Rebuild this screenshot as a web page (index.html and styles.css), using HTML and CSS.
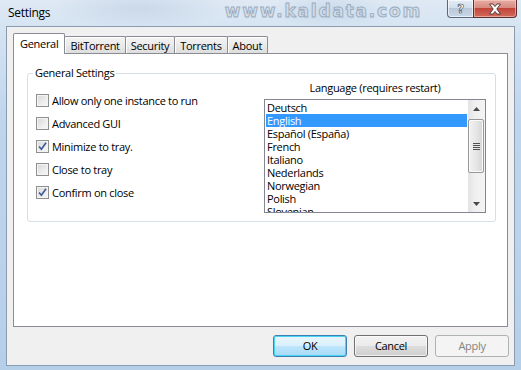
FILE: index.html
```html
<!DOCTYPE html>
<html>
<head>
<meta charset="utf-8">
<title>Settings</title>
<link rel="stylesheet" href="styles.css">
</head>
<body>
<div class="window">
  <div class="titlebar">
    <span class="title">Settings</span>
    <span class="watermark">www.kaldata.com</span>
    <div class="caption">
      <div class="cbtn help"><span class="q">?</span></div>
      <div class="cbtn close">
        <svg width="16" height="12" viewBox="0 0 16 12"><path d="M2.5 1 H6 L8 3.6 L10 1 H13.5 L9.8 6 L13.5 11 H10 L8 8.4 L6 11 H2.5 L6.2 6 Z" fill="#fff" stroke="#4a3030" stroke-width="0.9" stroke-linejoin="round"/></svg>
      </div>
    </div>
  </div>
  <div class="client">
    <div class="tabs">
      <div class="tab active">General</div>
      <div class="tab">BitTorrent</div>
      <div class="tab">Security</div>
      <div class="tab">Torrents</div>
      <div class="tab">About</div>
    </div>
    <div class="panel">
      <fieldset class="group">
        <legend>General Settings</legend>
        <div class="group-body">
          <div class="checks">
            <label class="check"><span class="box"></span>Allow only one instance to run</label>
            <label class="check"><span class="box"></span>Advanced GUI</label>
            <label class="check"><span class="box checked"><svg width="11" height="11" viewBox="0 0 11 11"><path d="M2 5.5 L4.4 8.2 L9 1.8" fill="none" stroke="#3d5a9c" stroke-width="1.7"/></svg></span>Minimize to tray.</label>
            <label class="check"><span class="box"></span>Close to tray</label>
            <label class="check"><span class="box checked"><svg width="11" height="11" viewBox="0 0 11 11"><path d="M2 5.5 L4.4 8.2 L9 1.8" fill="none" stroke="#3d5a9c" stroke-width="1.7"/></svg></span>Confirm on close</label>
          </div>
          <div class="lang">
            <div class="lang-label">Language (requires restart)</div>
            <div class="listbox">
              <ul class="items">
                <li>Deutsch</li>
                <li class="selected">English</li>
                <li>Español (España)</li>
                <li>French</li>
                <li>Italiano</li>
                <li>Nederlands</li>
                <li>Norwegian</li>
                <li>Polish</li>
                <li>Slovenian</li>
              </ul>
              <div class="scrollbar">
                <div class="sb-btn"><svg width="7" height="4" viewBox="0 0 7 4"><path d="M0 4 L3.5 0 L7 4 Z" fill="#4a4a4a"/></svg></div>
                <div class="thumb"><span class="grip"></span></div>
                <div class="sb-track"></div>
                <div class="sb-btn"><svg width="7" height="4" viewBox="0 0 7 4"><path d="M0 0 L7 0 L3.5 4 Z" fill="#4a4a4a"/></svg></div>
              </div>
            </div>
          </div>
        </div>
      </fieldset>
    </div>
    <div class="buttons">
      <div class="btn default">OK</div>
      <div class="btn">Cancel</div>
      <div class="btn disabled">Apply</div>
    </div>
  </div>
</div>
</body>
</html>
```
FILE: styles.css
```css
body {
  margin: 0;
}

.window {
  width: 521px;
  height: 370px;
  overflow: hidden;
  font-family: "Open Sans", "Noto Sans", sans-serif;
  font-size: 11px;
  letter-spacing: -0.3px;
  color: #000;
  background:
    radial-gradient(ellipse 90px 20px at 140px 8px, rgba(170, 190, 212, 0.35), transparent),
    radial-gradient(ellipse 60px 18px at 330px 10px, rgba(150, 175, 205, 0.25), transparent),
    linear-gradient(180deg, #dfe9f4 0px, #d6e4f2 26px, #bfd5ec 120px, #b6cfe9 370px);
}

.titlebar {
  height: 26px;
  display: flex;
  align-items: flex-start;
  padding-left: 8px;
}

.title {
  font-size: 12px;
  line-height: 26px;
  color: #000;
}

.watermark {
  margin-left: auto;
  margin-right: 25px;
  font-family: "DejaVu Sans", sans-serif;
  font-weight: bold;
  font-size: 17px;
  line-height: 23px;
  letter-spacing: 1.8px;
  color: #d3dde8;
  -webkit-text-stroke: 0.9px #98abc0;
}

.caption {
  display: flex;
  margin-right: 4px;
}

.cbtn {
  height: 18px;
  box-sizing: border-box;
  border: 1px solid #59677a;
  border-top: none;
  display: flex;
  align-items: center;
  justify-content: center;
}

.help {
  width: 26px;
  border-right: none;
  border-radius: 0 0 0 4px;
  background: linear-gradient(180deg, #e4ecf5 0%, #d2dfec 45%, #b9c9db 50%, #c9d8e8 100%);
  box-shadow: inset 0 0 0 1px rgba(255, 255, 255, 0.6);
}

.q {
  font-family: "DejaVu Sans", sans-serif;
  font-weight: bold;
  font-size: 12px;
  line-height: 14px;
  color: #fff;
  -webkit-text-stroke: 0.6px #3e4a5a;
}

.close {
  width: 44px;
  border-radius: 0 0 4px 0;
  border-color: #5a3030;
  background: linear-gradient(180deg, #e7aea5 0%, #d88a7f 45%, #c2453a 50%, #d26a5d 100%);
  box-shadow: inset 0 0 0 1px rgba(255, 220, 210, 0.5);
}

.client {
  margin-left: 6px;
  width: 509px;
  height: 340px;
  box-sizing: border-box;
  border: 1px solid #8c9cb0;
  background: #f0f0f0;
  padding: 6px 6px 0 6px;
  display: flex;
  flex-direction: column;
}

.tabs {
  display: flex;
  align-items: flex-end;
  height: 21px;
  margin-bottom: -1px;
  position: relative;
  z-index: 1;
}

.tab {
  box-sizing: border-box;
  height: 17px;
  margin-bottom: 1px;
  margin-left: -1px;
  padding: 2px 5px 0 5px;
  line-height: 14px;
  border: 1px solid #898c95;
  border-bottom: none;
  border-radius: 2px 2px 0 0;
  background: linear-gradient(180deg, #f3f3f3 0%, #ebebeb 50%, #dddddd 100%);
  box-shadow: inset 1px 1px 0 #fff;
}

.tab.active {
  height: 21px;
  margin-bottom: 0;
  margin-left: 0;
  padding: 3px 6px 0 6px;
  background: #fff;
  box-shadow: none;
  position: relative;
  z-index: 1;
}

.panel {
  height: 274px;
  box-sizing: border-box;
  border: 1px solid #898c95;
  background: #fff;
  padding: 12px 11px 0 13px;
}

.group {
  margin: 0;
  padding: 0 9px 8px 8px;
  border: 1px solid #d5dfe5;
  border-radius: 3px;
  min-width: 0;
}

.group legend {
  margin-left: -3px;
  padding: 0 2px;
  line-height: 14px;
}

.group-body {
  display: flex;
  justify-content: space-between;
}

.checks {
  display: flex;
  flex-direction: column;
  padding-top: 9px;
}

.check {
  height: 23px;
  display: flex;
  align-items: center;
  line-height: 14px;
}

.box {
  width: 13px;
  height: 13px;
  box-sizing: border-box;
  border: 1px solid #8e8f8f;
  margin-right: 3px;
  background: linear-gradient(135deg, #d6d6d6 0%, #ececec 55%, #f8f8f8 100%);
  box-shadow: inset 0 0 0 1px #f4f4f4;
  display: flex;
  align-items: center;
  justify-content: center;
}

.lang {
  width: 222px;
  display: flex;
  flex-direction: column;
}

.lang-label {
  text-align: center;
  line-height: 14px;
  padding: 1px 0 4px;
}

.listbox {
  width: 222px;
  height: 114px;
  box-sizing: border-box;
  border: 1px solid #828790;
  display: flex;
  background: #fff;
}

.items {
  list-style: none;
  margin: 0;
  flex: 1;
  padding: 1px 1px 0 1px;
  overflow: hidden;
}

.items li {
  height: 13px;
  line-height: 13px;
  padding-left: 1px;
  white-space: nowrap;
}

.items li.selected {
  background: #3399ff;
  color: #fff;
}

.scrollbar {
  width: 17px;
  display: flex;
  flex-direction: column;
  background: linear-gradient(90deg, #e3e3e3 0%, #f0f0f0 40%, #f4f4f4 100%);
}

.sb-btn {
  height: 17px;
  flex: none;
  display: flex;
  align-items: center;
  justify-content: center;
}

.thumb {
  flex: none;
  height: 54px;
  margin: 2px 1px 0 0;
  box-sizing: border-box;
  border: 1px solid #979797;
  border-radius: 2px;
  background: linear-gradient(90deg, #f2f2f2 0%, #e6e6e6 50%, #d6d6d6 100%);
  box-shadow: inset 0 0 0 1px #fafafa;
  display: flex;
  align-items: center;
  justify-content: center;
}

.grip {
  width: 7px;
  height: 7px;
  background: repeating-linear-gradient(180deg, #505050 0px, #505050 1px, #e8e8e8 1px, #e8e8e8 2px);
}

.sb-track {
  flex: 1;
}

.buttons {
  display: flex;
  justify-content: flex-end;
  gap: 7px;
  margin-top: 8px;
  margin-right: -1px;
}

.btn {
  width: 74px;
  height: 22px;
  box-sizing: border-box;
  border: 1px solid #707070;
  border-radius: 3px;
  background: linear-gradient(180deg, #f2f2f2 0%, #ebebeb 49%, #dddddd 50%, #cfcfcf 100%);
  box-shadow: inset 0 0 0 1px rgba(255, 255, 255, 0.7);
  text-align: center;
  line-height: 20px;
}

.btn.default {
  border-color: #3c7fb1;
  background: linear-gradient(180deg, #eaf6fd 0%, #d9f0fc 49%, #bee6fd 50%, #a7d9f5 100%);
  box-shadow: inset 0 0 0 1px #48d4f5;
}

.btn.disabled {
  border-color: #adb2b5;
  background: #f4f4f4;
  box-shadow: none;
  color: #838383;
}
```
